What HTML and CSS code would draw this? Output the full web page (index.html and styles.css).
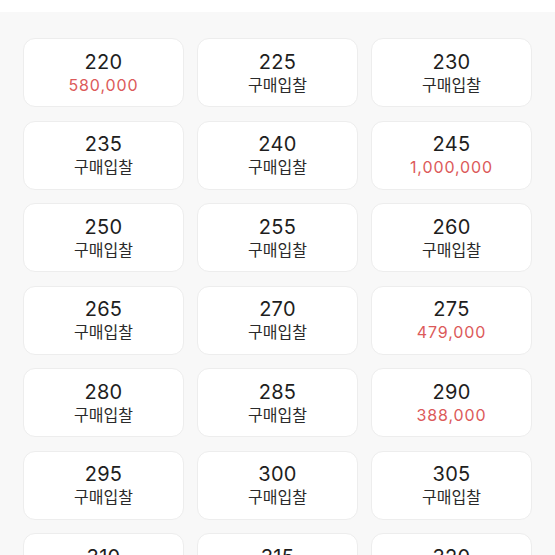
FILE: index.html
```html
<!DOCTYPE html>
<html lang="ko">
<head>
<meta charset="utf-8">
<link rel="stylesheet" href="styles.css">
</head>
<body>
<div class="topbar"></div>
<main class="grid">
  <div class="card"><div class="size">220</div><div class="price red">580,000</div></div>
  <div class="card"><div class="size">225</div><div class="price">구매입찰</div></div>
  <div class="card"><div class="size">230</div><div class="price">구매입찰</div></div>
  <div class="card"><div class="size">235</div><div class="price">구매입찰</div></div>
  <div class="card"><div class="size">240</div><div class="price">구매입찰</div></div>
  <div class="card"><div class="size">245</div><div class="price red">1,000,000</div></div>
  <div class="card"><div class="size">250</div><div class="price">구매입찰</div></div>
  <div class="card"><div class="size">255</div><div class="price">구매입찰</div></div>
  <div class="card"><div class="size">260</div><div class="price">구매입찰</div></div>
  <div class="card"><div class="size">265</div><div class="price">구매입찰</div></div>
  <div class="card"><div class="size">270</div><div class="price">구매입찰</div></div>
  <div class="card"><div class="size">275</div><div class="price red">479,000</div></div>
  <div class="card"><div class="size">280</div><div class="price">구매입찰</div></div>
  <div class="card"><div class="size">285</div><div class="price">구매입찰</div></div>
  <div class="card"><div class="size">290</div><div class="price red">388,000</div></div>
  <div class="card"><div class="size">295</div><div class="price">구매입찰</div></div>
  <div class="card"><div class="size">300</div><div class="price">구매입찰</div></div>
  <div class="card"><div class="size">305</div><div class="price">구매입찰</div></div>
  <div class="card"><div class="size">310</div><div class="price">구매입찰</div></div>
  <div class="card"><div class="size">315</div><div class="price">구매입찰</div></div>
  <div class="card"><div class="size">320</div><div class="price">구매입찰</div></div>
</main>
</body>
</html>
```
FILE: styles.css
```css
html, body {
  margin: 0;
  padding: 0;
  background: #f8f8f8;
  font-family: "Inter", "Noto Sans CJK KR", sans-serif;
  overflow: hidden;
}
.topbar {
  height: 12px;
  background: #ffffff;
}
.grid {
  display: grid;
  grid-template-columns: repeat(3, 161px);
  column-gap: 13px;
  row-gap: 13.5px;
  padding: 26px 23px 0 23px;
}
.card {
  height: 67px;
  background: #ffffff;
  border: 1px solid #ededed;
  border-radius: 12px;
  display: flex;
  flex-direction: column;
  align-items: center;
  justify-content: center;
  gap: 2px;
}
.size {
  font-size: 20px;
  line-height: 22px;
  color: #1e1e1e;
  letter-spacing: 0.3px;
}
.price {
  font-size: 16px;
  line-height: 20px;
  color: #2a2a2a;
}
.price.red {
  color: #dc5a5a;
  font-size: 16px;
  letter-spacing: 0.9px;
}
```
